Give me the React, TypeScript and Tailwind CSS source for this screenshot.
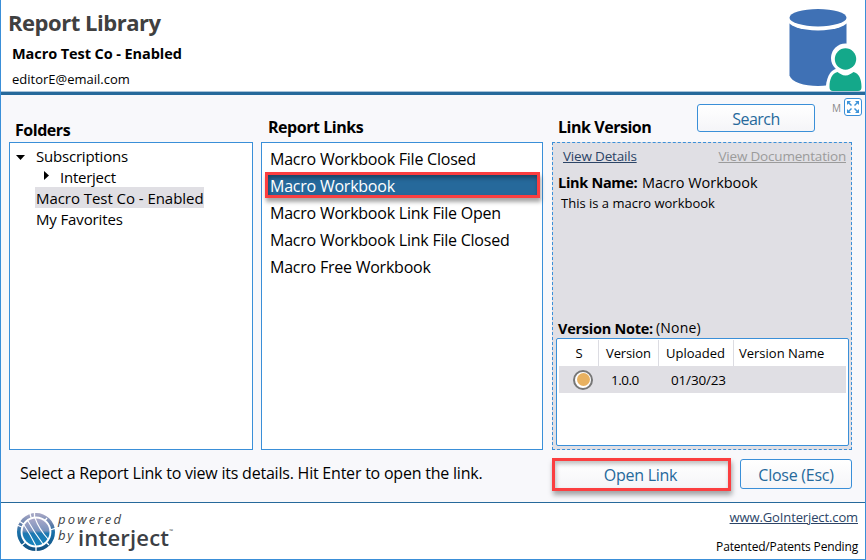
import type { ReactNode } from "react";

function DatabaseUserIcon() {
  return (
    <svg className="block h-[86px] w-[74px]" viewBox="788 5 74 86">
      <path d="M789.500 17.500V75.500C791.500 82 804 86 818 86S844.500 82 846.500 75.500V17.500Z" fill="#3f71b5" />
      <ellipse cx="818" cy="19" rx="31" ry="11.500" fill="#fff" />
      <rect x="787" y="5" width="62" height="17" fill="#fff" />
      <ellipse cx="818" cy="17.700" rx="28.500" ry="8.700" fill="#3f71b5" />
      <circle cx="845.500" cy="58" r="14.500" fill="#fff" />
      <path d="M825.500 93C825.500 80 829 70 837 68.500H854C861 70 866 80 866 93Z" fill="#fff" />
      <circle cx="845.500" cy="59" r="10.700" fill="#14a88a" />
      <path d="M829.500 87C829.500 79 832 73.500 837.500 72C840 73.500 842 75.500 845.500 75.500S851 73.500 853.500 72C859 73.500 861.500 79 861.500 87C861.500 89.500 860.500 91 858 91H833C830.500 91 829.500 89.500 829.500 87Z" fill="#14a88a" />
    </svg>
  );
}

function ExpandIcon() {
  return (
    <svg className="block size-[14px]" viewBox="0 0 14 14" fill="#3c93d9" stroke="#3c93d9" strokeWidth="1.500">
      <path d="M1 1H5L1 5Z" strokeWidth="0" />
      <path d="M2 2L5.500 5.500" />
      <path d="M13 1H9L13 5Z" strokeWidth="0" />
      <path d="M12 2L8.500 5.500" />
      <path d="M1 13H5L1 9Z" strokeWidth="0" />
      <path d="M2 12L5.500 8.500" />
      <path d="M13 13H9L13 9Z" strokeWidth="0" />
      <path d="M12 12L8.500 8.500" />
    </svg>
  );
}

function GlobeLogo() {
  return (
    <svg className="block size-10" viewBox="0 0 40 40">
      <defs>
        <linearGradient id="ring" x1="0" y1="0" x2="0" y2="1">
          <stop offset="0" stopColor="#a3a5c4" />
          <stop offset="0.300" stopColor="#5c7ba8" />
          <stop offset="0.500" stopColor="#1a71aa" />
          <stop offset="1" stopColor="#125383" />
        </linearGradient>
        <linearGradient id="globe" x1="0" y1="0" x2="0" y2="1">
          <stop offset="0" stopColor="#a9a8c9" />
          <stop offset="0.450" stopColor="#7b93bd" />
          <stop offset="0.550" stopColor="#1e78b1" />
          <stop offset="1" stopColor="#1584bd" />
        </linearGradient>
      </defs>
      <circle cx="20" cy="20" r="17.200" fill="none" stroke="url(#ring)" strokeWidth="3.600" />
      <g stroke="#fff" strokeWidth="1.300">
        <path d="M13.500 0L15.500 7M18.500 0V7M1 13L8 16M3 9L9 13M31 6L27 11M33 33L28 28M20 33V40M5 34L11 29M34 18L40 16" />
      </g>
      <circle cx="20" cy="20" r="13.500" fill="url(#globe)" />
      <g stroke="#fff" fill="none" strokeWidth="1.100">
        <path d="M8 13Q14 22 20 34M12 9Q18 20 27 32M19 6Q23 17 32 27" />
      </g>
    </svg>
  );
}

function Heading({ children }: { children: ReactNode }) {
  return <h2 className="text-[16px] font-bold leading-[20px] tracking-[-0.460px]">{children}</h2>;
}

const links = [
  { name: "Macro Workbook File Closed", selected: false },
  { name: "Macro Workbook", selected: true },
  { name: "Macro Workbook Link File Open", selected: false },
  { name: "Macro Workbook Link File Closed", selected: false },
  { name: "Macro Free Workbook", selected: false },
];

export default function App() {
  return (
    <div className="flex h-[560px] w-[866px] flex-col overflow-hidden whitespace-nowrap border border-t-0 border-[#3a8fd8] bg-white font-['Open_Sans',sans-serif] text-black">
      <header className="flex h-[91px] shrink-0 justify-between pl-[7px] pr-[3px]">
        <div className="pt-[7px]">
          <h1 className="text-[22px] font-bold leading-[30px] tracking-[-0.470px] text-[#404040]">Report Library</h1>
          <p className="mt-[5px] pl-[4px] text-[14.500px] font-bold leading-[24px] tracking-[-0.080px]">Macro Test Co - Enabled</p>
          <p className="pl-[4px] text-[13px] leading-[26px]">editorE@email.com</p>
        </div>
        <div className="pt-[5px]">
          <DatabaseUserIcon />
        </div>
      </header>
      <div className="h-[4px] shrink-0 border-t border-[#a9c3d8] bg-[#26699b]" />

      <main className="flex h-[407px] shrink-0 flex-col bg-[#f8f8fb] pl-[8px]">
        <div className="flex">
          <section className="w-[244px]">
            <div className="h-[47px] pl-[6px] pt-[25px]">
              <Heading>Folders</Heading>
            </div>
            <ul className="h-[308px] border border-[#3a8fd8] bg-white pt-[2px] text-[15px] leading-[20px]">
              <li className="flex h-[21px] items-center pl-[6px]">
                <svg className="mt-[3px] h-[5px] w-[9px]" viewBox="0 0 9 5"><path d="M0 0H9L4.500 5Z" /></svg>
                <span className="ml-[11px] pt-px tracking-[-0.200px]">Subscriptions</span>
              </li>
              <li className="flex h-[21px] items-center pl-[34px]">
                <svg className="mb-[2px] h-[9px] w-[5px]" viewBox="0 0 5 9"><path d="M0 0V9L5 4.500Z" /></svg>
                <span className="ml-[11px] pt-px tracking-[-0.250px]">Interject</span>
              </li>
              <li className="flex h-[21px] pl-[25px]">
                <span className="w-[169px] bg-[#e0dfe4] pl-[1px] pt-px tracking-[-0.050px]">Macro Test Co - Enabled</span>
              </li>
              <li className="h-[21px] pl-[26px] pt-px tracking-[-0.130px]">My Favorites</li>
            </ul>
          </section>

          <section className="ml-[8px] w-[282px]">
            <div className="h-[47px] pl-[7px] pt-[22px]">
              <Heading>Report Links</Heading>
            </div>
            <ul className="h-[308px] border border-[#3a8fd8] bg-white pl-[3px] pr-[2px] pt-[3px] text-[16px] tracking-[-0.230px]">
              {links.map((link) =>
                link.selected ? (
                  <li
                    key={link.name}
                    className="-mt-px mb-[2px] h-[26px] w-[275px] border-[3px] border-[#fb3e40] bg-[#26699b] pl-[2px] leading-[22px] text-white shadow-[1px_4px_4px_rgba(0,0,0,0.350),inset_1px_3px_4px_rgba(0,0,0,0.350)]"
                  >
                    {link.name}
                  </li>
                ) : (
                  <li key={link.name} className="h-[27px] pl-[5px] leading-[26px]">
                    {link.name}
                  </li>
                ),
              )}
            </ul>
          </section>

          <section className="ml-[9px] w-[311px]">
            <div className="flex h-[47px]">
              <div className="w-[145px] pl-[6px] pt-[22px]">
                <Heading>Link Version</Heading>
              </div>
              <button className="mt-[9px] h-[28px] w-[118px] rounded-[3px] border border-[#3a8fd8] bg-gradient-to-b from-white to-[#f5f5f8] pt-px text-[16px] leading-[26px] tracking-[-0.500px] text-[#26699b]">
                Search
              </button>
              <span className="ml-[17px] mt-[6px] w-[12px] text-[10px] leading-[14px] text-[#8a8a8a]">M</span>
              <button className="mt-[3px] flex size-[18px] items-center justify-center rounded-[3px] border border-[#3a8fd8] bg-white">
                <ExpandIcon />
              </button>
            </div>
            <div className="flex h-[308px] w-[300px] flex-col border border-dashed border-[#3a8fd8] bg-[#e0dfe4]">
              <div className="flex justify-between pl-[10px] pr-[5px] pt-[3px] text-[13.500px] leading-[20px] tracking-[-0.190px]">
                <a className="text-[#2c4466] underline">View Details</a>
                <a className="text-[#9b9b9b] underline">View Documentation</a>
              </div>
              <p className="pl-[5px] pt-[7px] text-[14.500px] leading-[20px]">
                <b className="inline-block w-[84px] tracking-[-0.300px]">Link Name:</b>
                <span className="tracking-[-0.040px]">Macro Workbook</span>
              </p>
              <p className="pl-[8px] text-[13px] leading-[20px]">This is a macro workbook</p>
              <p className="mt-auto flex pl-[5px] leading-[18px]">
                <b className="w-[98px] pt-px text-[14.500px] tracking-[-0.250px]">Version Note:</b>
                <span className="text-[14px] tracking-[0.200px]">(None)</span>
              </p>
              <div className="mb-[3px] ml-[3px] h-[108px] w-[293px] rounded-[2px] border border-[#3a8fd8] bg-white px-[2px] pt-px text-[13px]">
                <div className="flex h-[26px] leading-[27px]">
                  <span className="w-[40px] border-r border-[#dcdce2] pl-px text-center">S</span>
                  <span className="w-[60px] border-r border-[#dcdce2] pl-[7px] tracking-[-0.110px]">Version</span>
                  <span className="w-[75px] border-r border-[#dcdce2] pl-[7px]">Uploaded</span>
                  <span className="pl-[5px]">Version Name</span>
                </div>
                <div className="flex h-[27px] items-center bg-[#e0dfe4] text-[13.500px]">
                  <span className="ml-[14px] flex size-[20px] items-center justify-center rounded-full border-2 border-[#777] bg-white">
                    <span className="size-[13px] rounded-full bg-[#e8b160]" />
                  </span>
                  <span className="ml-[18px] w-[60px] pt-px tracking-[-0.500px]">1.0.0</span>
                  <span className="pt-px tracking-[-0.170px]">01/30/23</span>
                </div>
              </div>
            </div>
          </section>
        </div>

        <div className="flex pl-[11px] pt-[8px] text-[16px]">
          <p className="w-[532px] pt-[5px] leading-[20px] tracking-[-0.220px]">
            Select a Report Link to view its details. Hit Enter to open the link.
          </p>
          <button className="h-[33px] w-[179px] border-[3px] border-[#fb3e40] bg-gradient-to-b from-white to-[#f5f5f8] pr-[2px] pt-px leading-[26px] tracking-[-0.260px] text-[#26699b] shadow-[1px_4px_5px_rgba(0,0,0,0.350),inset_1px_3px_4px_rgba(0,0,0,0.250)]">
            Open Link
          </button>
          <button className="ml-[9px] mt-px h-[30px] w-[112px] rounded-[3px] border border-[#3a8fd8] bg-gradient-to-b from-white to-[#f5f5f8] pt-[2px] leading-[26px] tracking-[-0.260px] text-[#26699b]">
            Close (Esc)
          </button>
        </div>
      </main>

      <footer className="flex h-[57px] justify-between border-t border-[#26699b] pl-[15px] pr-[7px]">
        <div className="flex pt-[9px] text-[#3c3f45]">
          <GlobeLogo />
          <div className="ml-[2px] italic">
            <p className="text-[13px] leading-[14px] tracking-[2.200px]">powered</p>
            <div className="flex">
              <span className="mt-[2px] w-[20px] text-[13px] leading-[14px] tracking-[1.800px]">by</span>
              <span className="mt-[2px] text-[22px] font-semibold not-italic leading-[18px] tracking-[0.200px]">interject</span>
              <span className="mt-[2px] text-[5px] not-italic leading-[6px]">™</span>
            </div>
          </div>
        </div>
        <div className="pt-[4px] text-right">
          <p className="text-[13px] leading-[20px] tracking-[-0.120px] text-[#2c4466] underline">www.GoInterject.com</p>
          <p className="mt-[10px] text-[12px] leading-[20px] tracking-[-0.170px]">Patented/Patents Pending</p>
        </div>
      </footer>
    </div>
  );
}
